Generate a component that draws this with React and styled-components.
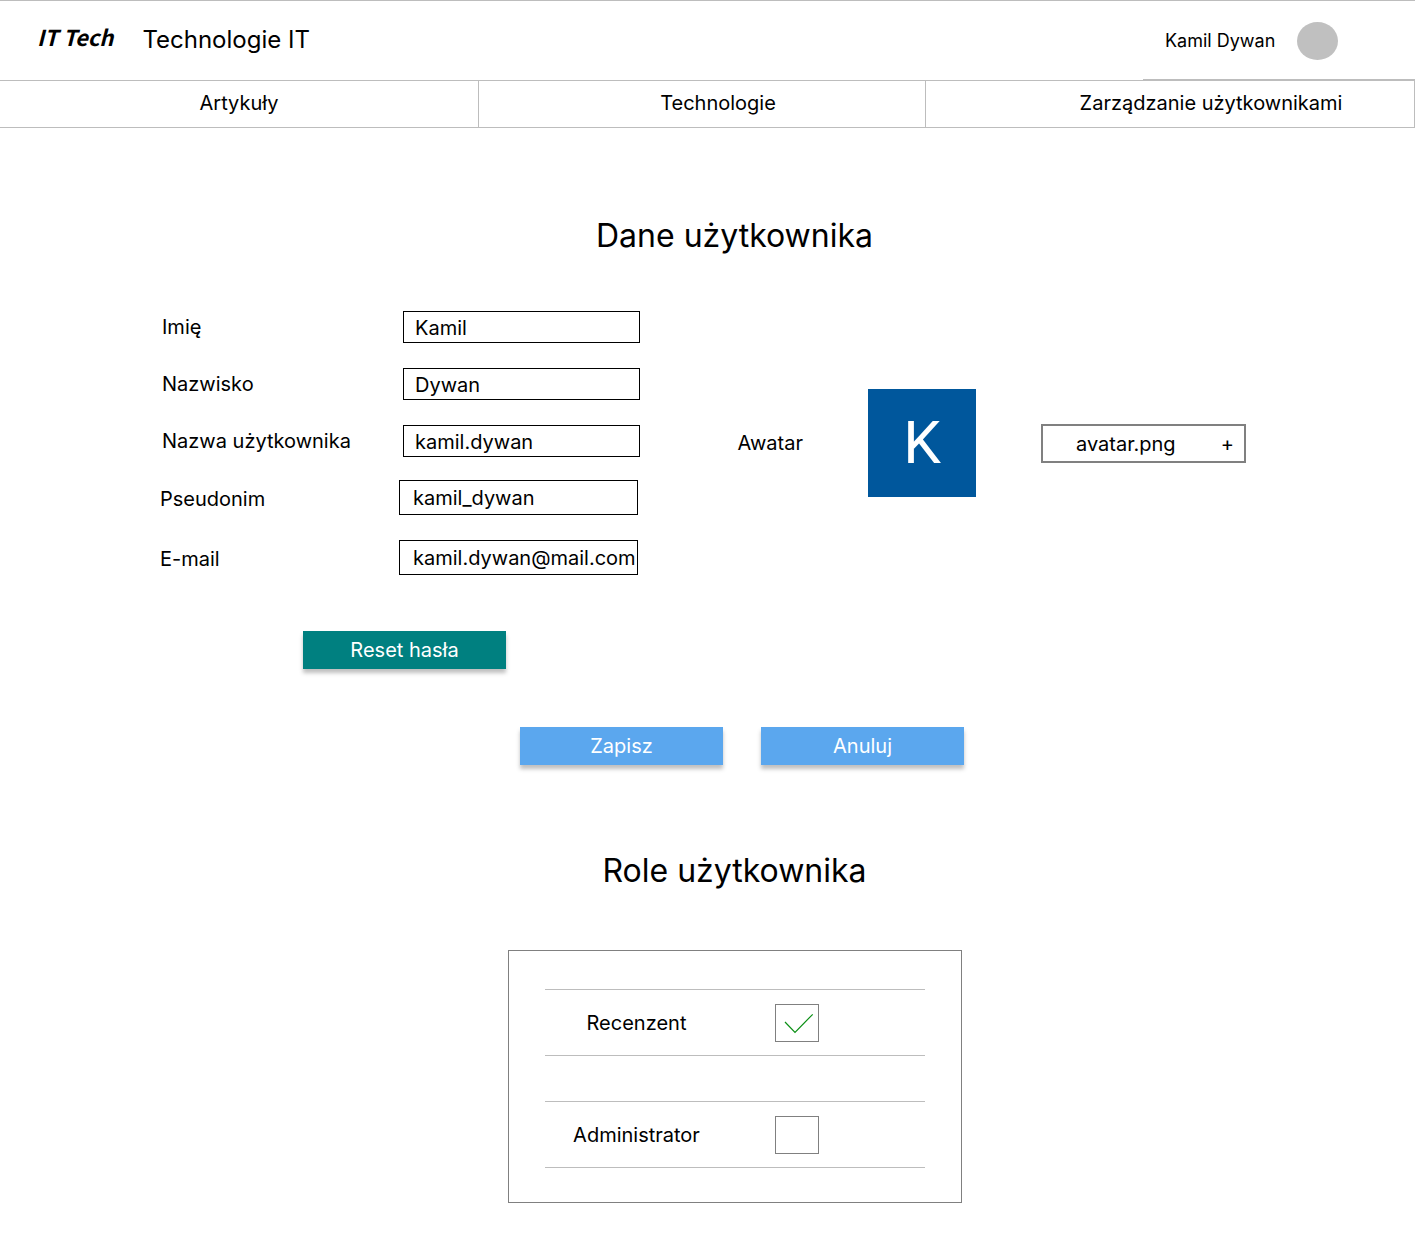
import React, { useState } from "react";
import styled, { createGlobalStyle } from "styled-components";

const GlobalStyle = createGlobalStyle`
  *, *::before, *::after { box-sizing: border-box; }
  body {
    margin: 0;
    background: #fff;
    color: #000;
    font-family: Inter, "Liberation Sans", sans-serif;
    font-size: 20px;
    line-height: 24px;
  }
`;

const Header = styled.header`
  display: flex;
  justify-content: space-between;
  height: 81px;
  border: solid #bdbdbd;
  border-width: 1px 0;
`;

const Brand = styled.div`
  display: flex;
  align-items: center;
  gap: 29px;
  padding: 0 0 2px 37px;
`;

const Logo = styled.a`
  padding-bottom: 7px;
  color: inherit;
  text-decoration: none;
  font-family: "Noto Sans CJK JP", "Noto Sans", sans-serif;
  font-size: 22px;
  font-style: italic;
  font-weight: 700;
`;

const SiteName = styled.span`
  font-size: 24px;
`;

const UserBox = styled.div`
  display: flex;
  align-items: center;
  gap: 22px;
  width: 272px;
  padding: 1px 0 0 22px;
  border-bottom: 1px solid #bdbdbd;
  font-size: 18px;
`;

const UserDot = styled.span`
  width: 41px;
  height: 38px;
  border-radius: 50%;
  background: #c0c0c0;
`;

const Nav = styled.nav`
  display: grid;
  grid-template-columns: 479fr 447fr 489fr;
  border-bottom: 1px solid #bdbdbd;
`;

const NavLink = styled.a`
  height: 46px;
  padding: 10px 0 12px ${(p) => p.$indent}px;
  border-right: 1px solid #bdbdbd;
  color: inherit;
  text-align: center;
  text-decoration: none;
`;

const Main = styled.main`
  padding: 88px 0 48px 54px;
`;

const Title = styled.h1`
  margin: 0;
  font-size: 32px;
  font-weight: 400;
  line-height: 40px;
  text-align: center;
`;

const Form = styled.form`
  margin: 55px 0 86px;
`;

const Columns = styled.div`
  display: flex;
  justify-content: space-between;
  padding: 0 169px 0 106px;
`;

const Fields = styled.div`
  display: flex;
  flex-direction: column;
  gap: 23px;
`;

const FieldGroup = styled.div`
  display: grid;
  grid-template-columns: ${(p) => (p.$large ? "239px 239px" : "241px 237px")};
  gap: 25px 0;
  align-items: center;
  padding-left: ${(p) => (p.$large ? 0 : 2)}px;
`;

const FieldLabel = styled.label`
  padding-top: ${(p) => (p.$large ? 2 : 0)}px;
`;

const TextInput = styled.input`
  width: 100%;
  height: ${(p) => (p.$large ? 35 : 32)}px;
  padding: ${(p) => (p.$large ? "0 0 0 13px" : "2px 0 0 11px")};
  border: 1px solid #000;
  border-radius: 0;
  background: #fff;
  color: inherit;
  font: inherit;
`;

const AvatarRow = styled.div`
  display: flex;
  align-items: center;
  align-self: flex-start;
  gap: 65px;
  padding-top: 78px;
`;

const AvatarTile = styled.div`
  display: grid;
  place-items: center;
  width: 108px;
  height: 108px;
  background: #00579c;
  color: #fff;
  font-family: Roboto, sans-serif;
  font-size: 60px;
  line-height: 60px;
`;

const FilePicker = styled.label`
  position: relative;
  display: flex;
  align-items: center;
  justify-content: space-between;
  width: 205px;
  height: 39px;
  padding: 2px 10px 0 33px;
  border: 2px solid #808080;
  cursor: pointer;
`;

const FileInput = styled.input`
  position: absolute;
  inset: 0;
  width: 100%;
  height: 100%;
  opacity: 0;
  cursor: pointer;
`;

const Button = styled.button`
  width: 203px;
  height: 38px;
  padding: 0;
  border: 0;
  background: ${(p) => (p.$teal ? "#008080" : "#5ba7ee")};
  box-shadow: 0 4px 4px rgba(0, 0, 0, 0.25);
  color: #fff;
  font: inherit;
  cursor: pointer;
`;

const ResetRow = styled.div`
  padding: 56px 0 0 249px;
`;

const Actions = styled.div`
  display: flex;
  justify-content: center;
  gap: 38px;
  padding: 58px 0 0 15px;
`;

const Panel = styled.div`
  display: flex;
  flex-direction: column;
  gap: 45px;
  width: 454px;
  margin: 59px auto 0;
  padding: 38px 36px 34px;
  border: 1px solid #808080;
`;

const RoleRow = styled.div`
  display: grid;
  grid-template-columns: 184px 1fr;
  align-items: center;
  height: 67px;
  border: solid #bdbdbd;
  border-width: 1px 0;
`;

const RoleLabel = styled.label`
  text-align: center;
`;

const CheckCell = styled.span`
  display: grid;
  padding-left: 46px;

  > * { grid-area: 1 / 1; }
`;

const Checkbox = styled.input`
  appearance: none;
  width: 44px;
  height: 38px;
  margin: 0;
  border: 1px solid #808080;
  cursor: pointer;
`;

const CheckMark = styled.svg`
  pointer-events: none;
`;

const personal = [
  { id: "first", label: "Imię", value: "Kamil" },
  { id: "last", label: "Nazwisko", value: "Dywan" },
  { id: "login", label: "Nazwa użytkownika", value: "kamil.dywan" },
];

const account = [
  { id: "nick", label: "Pseudonim", value: "kamil_dywan" },
  { id: "email", label: "E-mail", value: "kamil.dywan@mail.com", type: "email" },
];

function FieldList({ fields, large }) {
  return (
    <FieldGroup $large={large}>
      {fields.map((f) => (
        <React.Fragment key={f.id}>
          <FieldLabel htmlFor={f.id} $large={large}>{f.label}</FieldLabel>
          <TextInput id={f.id} type={f.type || "text"} defaultValue={f.value} $large={large} />
        </React.Fragment>
      ))}
    </FieldGroup>
  );
}

function Role({ id, name, initial }) {
  const [on, setOn] = useState(initial);
  return (
    <RoleRow>
      <RoleLabel htmlFor={id}>{name}</RoleLabel>
      <CheckCell>
        <Checkbox id={id} type="checkbox" checked={on} onChange={(e) => setOn(e.target.checked)} />
        {on && (
          <CheckMark width="44" height="38" viewBox="0 0 44 38" fill="none" stroke="#0a8f14" strokeWidth="1.2" aria-hidden="true">
            <path d="M10 18L20 28.3L37.7 10.3" />
          </CheckMark>
        )}
      </CheckCell>
    </RoleRow>
  );
}

export default function App() {
  return (
    <>
      <GlobalStyle />
      <Header>
        <Brand>
          <Logo href="#">IT Tech</Logo>
          <SiteName>Technologie IT</SiteName>
        </Brand>
        <UserBox>
          <span>Kamil Dywan</span>
          <UserDot />
        </UserBox>
      </Header>
      <Nav>
        <NavLink href="#" $indent={0}>Artykuły</NavLink>
        <NavLink href="#" $indent={32}>Technologie</NavLink>
        <NavLink href="#" $indent={82}>Zarządzanie użytkownikami</NavLink>
      </Nav>
      <Main>
        <Title>Dane użytkownika</Title>
        <Form onSubmit={(e) => e.preventDefault()}>
          <Columns>
            <Fields>
              <FieldList fields={personal} />
              <FieldList fields={account} large />
            </Fields>
            <AvatarRow>
              <label htmlFor="avatar">Awatar</label>
              <AvatarTile>K</AvatarTile>
              <FilePicker>
                <span>avatar.png</span>
                <span>+</span>
                <FileInput id="avatar" type="file" accept="image/*" />
              </FilePicker>
            </AvatarRow>
          </Columns>
          <ResetRow>
            <Button type="button" $teal>Reset hasła</Button>
          </ResetRow>
          <Actions>
            <Button type="submit">Zapisz</Button>
            <Button type="reset">Anuluj</Button>
          </Actions>
        </Form>
        <Title as="h2">Role użytkownika</Title>
        <Panel>
          <Role id="reviewer" name="Recenzent" initial={true} />
          <Role id="admin" name="Administrator" initial={false} />
        </Panel>
      </Main>
    </>
  );
}
